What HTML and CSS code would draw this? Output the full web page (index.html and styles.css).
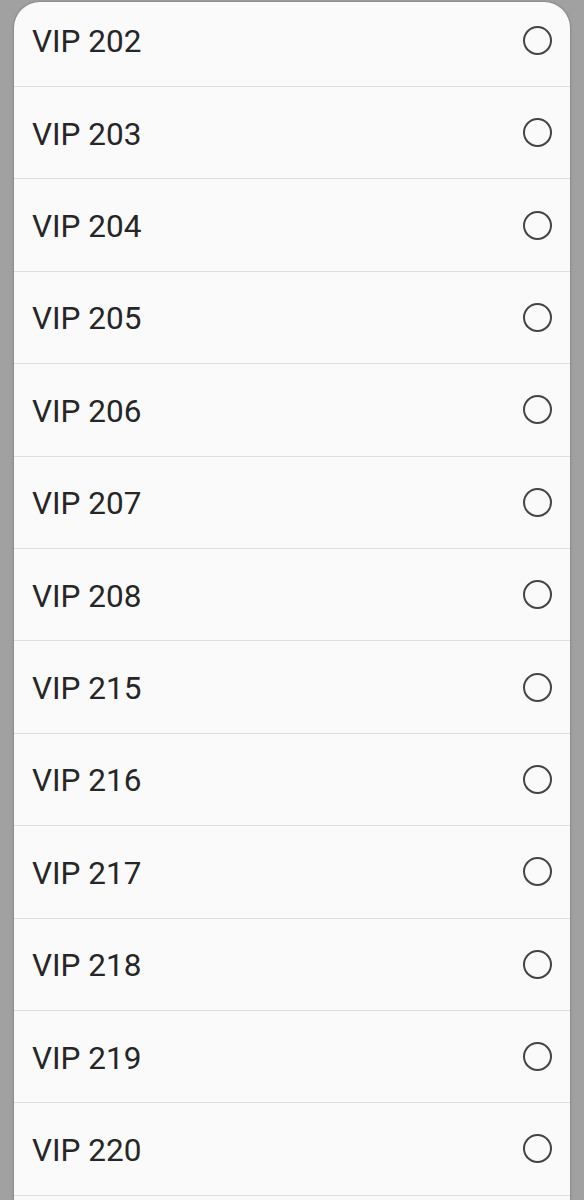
FILE: index.html
```html
<!DOCTYPE html>
<html lang="en">
<head>
  <meta charset="UTF-8">
  <meta name="viewport" content="width=device-width, initial-scale=1.0">
  <title>VIP Rooms</title>
  <link rel="stylesheet" href="styles.css">
</head>
<body>
  <div class="sheet">
    <ul class="options">
      <li class="option"><span class="label">VIP 202</span><span class="radio"></span></li>
      <li class="option"><span class="label">VIP 203</span><span class="radio"></span></li>
      <li class="option"><span class="label">VIP 204</span><span class="radio"></span></li>
      <li class="option"><span class="label">VIP 205</span><span class="radio"></span></li>
      <li class="option"><span class="label">VIP 206</span><span class="radio"></span></li>
      <li class="option"><span class="label">VIP 207</span><span class="radio"></span></li>
      <li class="option"><span class="label">VIP 208</span><span class="radio"></span></li>
      <li class="option"><span class="label">VIP 215</span><span class="radio"></span></li>
      <li class="option"><span class="label">VIP 216</span><span class="radio"></span></li>
      <li class="option"><span class="label">VIP 217</span><span class="radio"></span></li>
      <li class="option"><span class="label">VIP 218</span><span class="radio"></span></li>
      <li class="option"><span class="label">VIP 219</span><span class="radio"></span></li>
      <li class="option"><span class="label">VIP 220</span><span class="radio"></span></li>
    </ul>
  </div>
</body>
</html>
```

FILE: styles.css
```css
/* Reset and base */
* {
  box-sizing: border-box;
  margin: 0;
  padding: 0;
}

html, body {
  height: 100%;
  overflow: hidden;
}

body {
  font-family: Roboto, 'Noto Sans', sans-serif;
  background: #a1a1a1;
  padding: 2px 14px 0;
}

.sheet {
  background: #fafafa;
  border-radius: 26px 26px 0 0;
  box-shadow: 0 0 3px rgba(0, 0, 0, 0.3);
  overflow: hidden;
  height: 1400px;
}

.options {
  list-style: none;
  margin-top: -7.4px;
}

.option {
  display: flex;
  align-items: center;
  justify-content: space-between;
  height: 92.4px;
  padding: 0 18px 0 18px;
  border-bottom: 1.5px solid #dedede;
}

.label {
  font-size: 31.5px;
  color: #262626;
  padding-top: 3px;
}

.radio {
  width: 29px;
  height: 29px;
  border: 2.4px solid #444444;
  border-radius: 50%;
  margin-right: 0.5px;
}
```
